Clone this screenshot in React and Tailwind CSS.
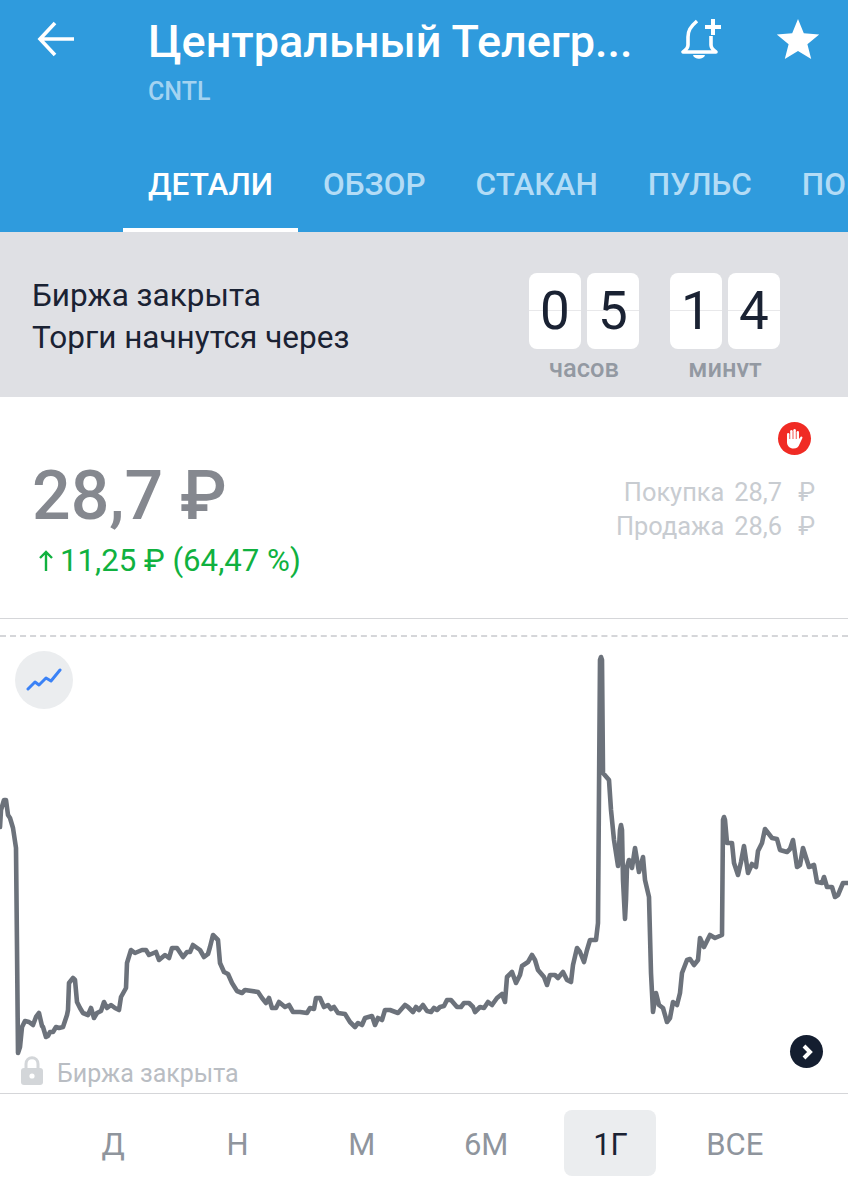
const TABS = ["ДЕТАЛИ", "ОБЗОР", "СТАКАН", "ПУЛЬС", "ПОРТФЕЛЬ"];
const RANGES = ["Д", "Н", "М", "6М", "1Г", "ВСЕ"];

const CHART =
  "0,827 1,810 4,800 6,800 8,815 10,818 13,828 16,848 17,947 18,1053 20,1047 22,1027 25,1021 29,1022 33,1025 36,1017 39,1013 42,1026 43,1027 46,1037 48,1036 50,1032 53,1032 56,1027 59,1028 63,1027 67,1015 68,1010 69,983 73,978 75,980 77,1002 80,1008 83,1013 88,1015 91,1008 94,1018 97,1013 101,1011 104,1002 107,1008 111,1005 115,1008 119,1010 121,997 126,988 127,963 131,950 135,953 142,950 146,950 149,955 156,952 159,960 165,955 169,958 172,948 177,948 183,957 187,952 190,952 193,945 200,950 204,957 208,954 210,947 213,935 218,940 220,963 224,972 228,974 232,983 237,991 242,993 245,990 258,992 262,998 266,1003 269,998 272,1008 276,1008 279,1002 285,1007 289,1005 293,1012 300,1012 " +
  "307,1013 310,1008 314,1009 316,998 320,998 324,1007 328,1005 331,1009 334,1007 338,1013 345,1014 350,1022 355,1027 358,1023 362,1025 365,1018 372,1016 375,1025 378,1018 382,1020 385,1010 390,1010 398,1013 405,1005 408,1007 413,1012 416,1007 419,1010 423,1005 427,1011 431,1012 434,1008 437,1010 440,1007 444,1006 447,1000 451,1000 457,1007 461,1007 464,1003 469,1003 473,1007 475,1012 480,1007 484,1008 488,1002 492,1005 497,998 502,994 505,1002 507,977 512,972 516,983 520,975 522,966 528,962 532,955 535,960 538,970 544,977 547,985 550,975 555,975 558,978 563,972 567,980 571,982 573,965 577,948 580,952 584,962 587,950 590,940 596,940 598,923 " +
  "600,660 601,657 602,660 603,773 609,780 611,810 614,840 618,866 620,830 621,825 622,830 623,880 625,919 626,900 627,867 629,860 632,868 635,848 639,872 643,857 645,880 649,897 651,973 653,1012 656,993 659,1005 663,1008 667,1022 670,1018 673,1002 677,1005 680,993 682,973 687,960 690,959 694,965 698,960 700,938 704,947 710,935 715,938 722,935 723,820 724,817 725,820 727,843 732,843 734,863 738,875 741,862 744,846 748,873 752,864 756,867 758,851 762,843 765,829 772,838 777,839 780,850 787,852 790,849 793,840 797,867 800,865 803,848 809,867 814,865 817,882 822,883 824,877 827,887 832,887 835,897 838,895 843,883 848,883";

function FlipCard({ value }) {
  return (
    <div className="relative flex h-[76px] w-[52px] items-center justify-center rounded-lg bg-white text-[53px] leading-none text-[#1a2233]">
      {value}
      <div className="absolute inset-x-0 top-[37px] h-px bg-[#1a2233]/10" />
    </div>
  );
}

function Countdown({ digits, label }) {
  return (
    <div className="flex w-[110px] flex-col items-center">
      <div className="flex gap-1.5">
        <FlipCard value={digits[0]} />
        <FlipCard value={digits[1]} />
      </div>
      {/* the label is cut off at the bottom in the app */}
      <div className="mt-[7px] h-[21px] overflow-hidden text-[25.5px] font-medium leading-[24px] text-[#9399a2]">
        {label}
      </div>
    </div>
  );
}

function BellPlus() {
  return (
    <svg width="42" height="42" viewBox="0 0 42 42" fill="none" stroke="white" strokeWidth="3.6">
      <path d="M17 2 C10 8 8 12 8 18 V26 C8 29 6 31 3 33 H36 C33 31 31 29 31 26 V17" strokeLinejoin="round" />
      <path d="M13 36 C14 41 24 41 25 36 Z" fill="white" stroke="none" />
      <path d="M33 0 V16 M25 8 H41" strokeWidth="4" />
    </svg>
  );
}

export default function App() {
  return (
    <div className="flex h-[1200px] w-full flex-col overflow-hidden bg-white font-['Roboto',sans-serif]">
      <header className="flex h-[232px] shrink-0 flex-col bg-[#2f9bdd] shadow-[0_2px_4px_rgba(0,0,0,0.12)]">
        <div className="flex h-[123px] pt-[15px]">
          <div className="w-[148px] shrink-0 pl-[36px] pt-[3px]">
            <svg width="42" height="42" viewBox="0 0 42 42" fill="none" stroke="white" strokeWidth="3.6">
              <path d="M38 21 H5 M19 5 L4 21 L19 37" />
            </svg>
          </div>
          <div className="w-[490px] shrink-0 pt-[1px]">
            <div className="whitespace-nowrap text-[45px] font-medium leading-[52px] text-white">
              Центральный Телегр...
            </div>
            <div className="mt-[10px] text-[25px] font-medium leading-[28px] text-[#a3d3f1]">CNTL</div>
          </div>
          <div className="ml-[42px] pt-[4px]">
            <BellPlus />
          </div>
          <div className="ml-[52px]">
            <svg width="48" height="48" viewBox="0 0 24 24" fill="white">
              <path d="M12 2 L14.9 9.1 L22.6 9.7 L16.7 14.6 L18.6 22 L12 18 L5.4 22 L7.3 14.6 L1.4 9.7 L9.1 9.1 Z" />
            </svg>
          </div>
        </div>
        <nav className="flex flex-1 overflow-hidden pl-[123px]">
          {TABS.map((tab, i) => (
            <div
              key={tab}
              className={`flex shrink-0 items-center whitespace-nowrap border-b-4 px-[25px] pt-[18px] text-[31.5px] font-medium ${
                i === 0 ? "border-white text-white" : "border-transparent text-[#b3dcf6]"
              }`}
            >
              {tab}
            </div>
          ))}
        </nav>
      </header>

      <section className="flex h-[165px] shrink-0 items-start justify-between bg-[#dfe0e4] pl-[32px] pr-[68px] pt-[41px]">
        <div className="pt-[2px] text-[31.5px] leading-[42px] text-[#1a2233]">
          <div>Биржа закрыта</div>
          <div>Торги начнутся через</div>
        </div>
        <div className="flex gap-[31px]">
          <Countdown digits="05" label="часов" />
          <Countdown digits="14" label="минут" />
        </div>
      </section>

      <section className="relative flex h-[222px] shrink-0 flex-col border-b border-[#d5d6d9] pl-[32px] pr-[33px]">
        <div className="absolute right-[37px] top-[25px] flex h-[33px] w-[33px] items-center justify-center rounded-full bg-[#f02b24]">
          <svg width="19" height="21" viewBox="0 0 19 21" fill="white">
            <rect x="2" y="5" width="2.4" height="10" rx="1.2" />
            <rect x="5.2" y="2" width="2.4" height="12" rx="1.2" />
            <rect x="8.4" y="1" width="2.4" height="12" rx="1.2" />
            <rect x="11.6" y="3" width="2.4" height="11" rx="1.2" />
            <path d="M2 11 H14 V11 L15.5 9 C16.5 8 18 9 17.3 10.3 L14.6 16 C13.6 19 11.6 20.5 8.6 20.5 C4.6 20.5 2 18 2 14 Z" />
          </svg>
        </div>
        <div className="flex flex-1 justify-between">
          <div>
            <div className="mt-[59px] text-[68px] font-medium leading-[80px] text-[#85888f]">28,7 ₽</div>
            <div className="mt-[5px] flex items-center text-[31.2px] leading-[40px] text-[#10b13f]">
              <svg className="ml-[6px] mr-[6px]" width="16" height="22" viewBox="0 0 16 22" fill="none" stroke="#10b13f" strokeWidth="2.4">
                <path d="M8 21 V2 M2 8 L8 2 L14 8" />
              </svg>
              11,25 ₽ (64,47 %)
            </div>
          </div>
          <div className="mt-[78px] grid grid-cols-[auto_auto_auto] content-start gap-x-[10px] text-right text-[25.4px] leading-[34px] text-[#c8ccd1]">
            <span>Покупка</span>
            <span>28,7</span>
            <span className="pl-[6px]">₽</span>
            <span>Продажа</span>
            <span>28,6</span>
            <span className="pl-[6px]">₽</span>
          </div>
        </div>
      </section>

      <section className="relative flex-1">
        <div className="mt-[16px] border-t-2 border-dashed border-[#d5d6d9]" />
        <svg className="absolute inset-0" width="848" height="474" viewBox="0 619 848 474" fill="none">
          <polyline points={CHART} stroke="#6c727b" strokeWidth="4.6" strokeLinejoin="round" strokeLinecap="round" />
        </svg>
        <button className="absolute left-[15px] top-[32px] flex h-[58px] w-[58px] items-center justify-center rounded-full bg-[#ebedef]">
          <svg width="36" height="24" viewBox="0 0 36 24" fill="none" stroke="#3b82f6" strokeWidth="3" strokeLinejoin="round" strokeLinecap="round">
            <path d="M2 21 L9 14 L13 17 L20 10 L25 13 L34 2" />
          </svg>
        </button>
        <div className="absolute bottom-[2px] left-[20px] flex items-center gap-[13px] text-[25px] leading-[32px] text-[#b9bdc3]">
          <svg className="mb-[6px]" width="24" height="29" viewBox="0 0 24 29">
            <path d="M6 13 V8 C6 -0.5 18 -0.5 18 8 V13" fill="none" stroke="#d3d6d9" strokeWidth="3" />
            <rect x="1" y="12" width="22" height="17" rx="3" fill="#d3d6d9" />
            <circle cx="12" cy="20" r="2.6" fill="white" />
          </svg>
          Биржа закрыта
        </div>
        <div className="absolute left-[790px] top-[416px] flex h-[33px] w-[33px] items-center justify-center rounded-full bg-[#141e30]">
          <svg width="14" height="18" viewBox="0 0 14 18" fill="none" stroke="white" strokeWidth="4">
            <path d="M4 3 L10 9 L4 15" />
          </svg>
        </div>
      </section>

      <nav className="grid h-[107px] shrink-0 grid-cols-6 border-t border-[#d5d6d9] px-[51px] pt-[16px]">
        {RANGES.map((range) => (
          <div
            key={range}
            className={`mx-auto flex h-[66px] w-[92px] items-center justify-center rounded-lg pt-[4px] text-[31px] ${
              range === "1Г" ? "bg-[#ebedef] text-[#1a2233]" : "text-[#8f959d]"
            }`}
          >
            {range}
          </div>
        ))}
      </nav>
    </div>
  );
}
